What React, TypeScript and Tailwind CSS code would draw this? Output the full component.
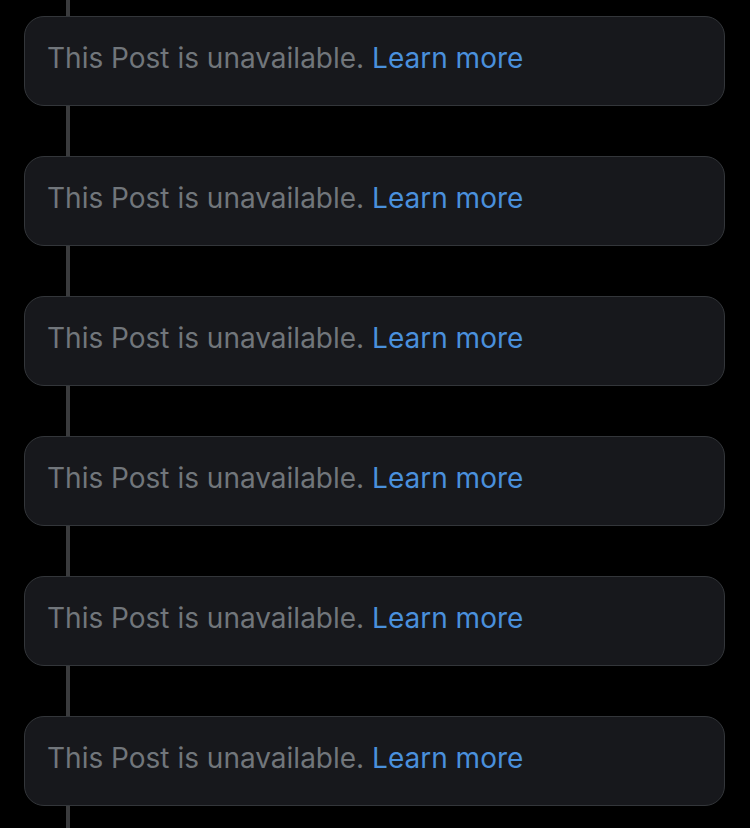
import React from "react";

function Card() {
  return (
    <div className="h-[90px] rounded-[20px] border border-[#33363a] bg-[#17181c] pl-[22px] pt-[24px]">
      <p className="text-[28px] leading-[34px] text-[#71767b]" style={{ fontFamily: "Inter, 'Noto Sans', sans-serif" }}>
        This Post is unavailable. <span className="text-[#4a90dc]">Learn more</span>
      </p>
    </div>
  );
}

export default function App() {
  return (
    <div className="h-[828px] w-[750px] overflow-hidden bg-black pl-[24px] pr-[25px]">
      <div className="ml-[42px] h-[16px] w-[4px] bg-[#3a3b3d]" />
      <Card />
      <div className="ml-[42px] h-[50px] w-[4px] bg-[#3a3b3d]" />
      <Card />
      <div className="ml-[42px] h-[50px] w-[4px] bg-[#3a3b3d]" />
      <Card />
      <div className="ml-[42px] h-[50px] w-[4px] bg-[#3a3b3d]" />
      <Card />
      <div className="ml-[42px] h-[50px] w-[4px] bg-[#3a3b3d]" />
      <Card />
      <div className="ml-[42px] h-[50px] w-[4px] bg-[#3a3b3d]" />
      <Card />
      <div className="ml-[42px] h-[30px] w-[4px] bg-[#3a3b3d]" />
    </div>
  );
}
